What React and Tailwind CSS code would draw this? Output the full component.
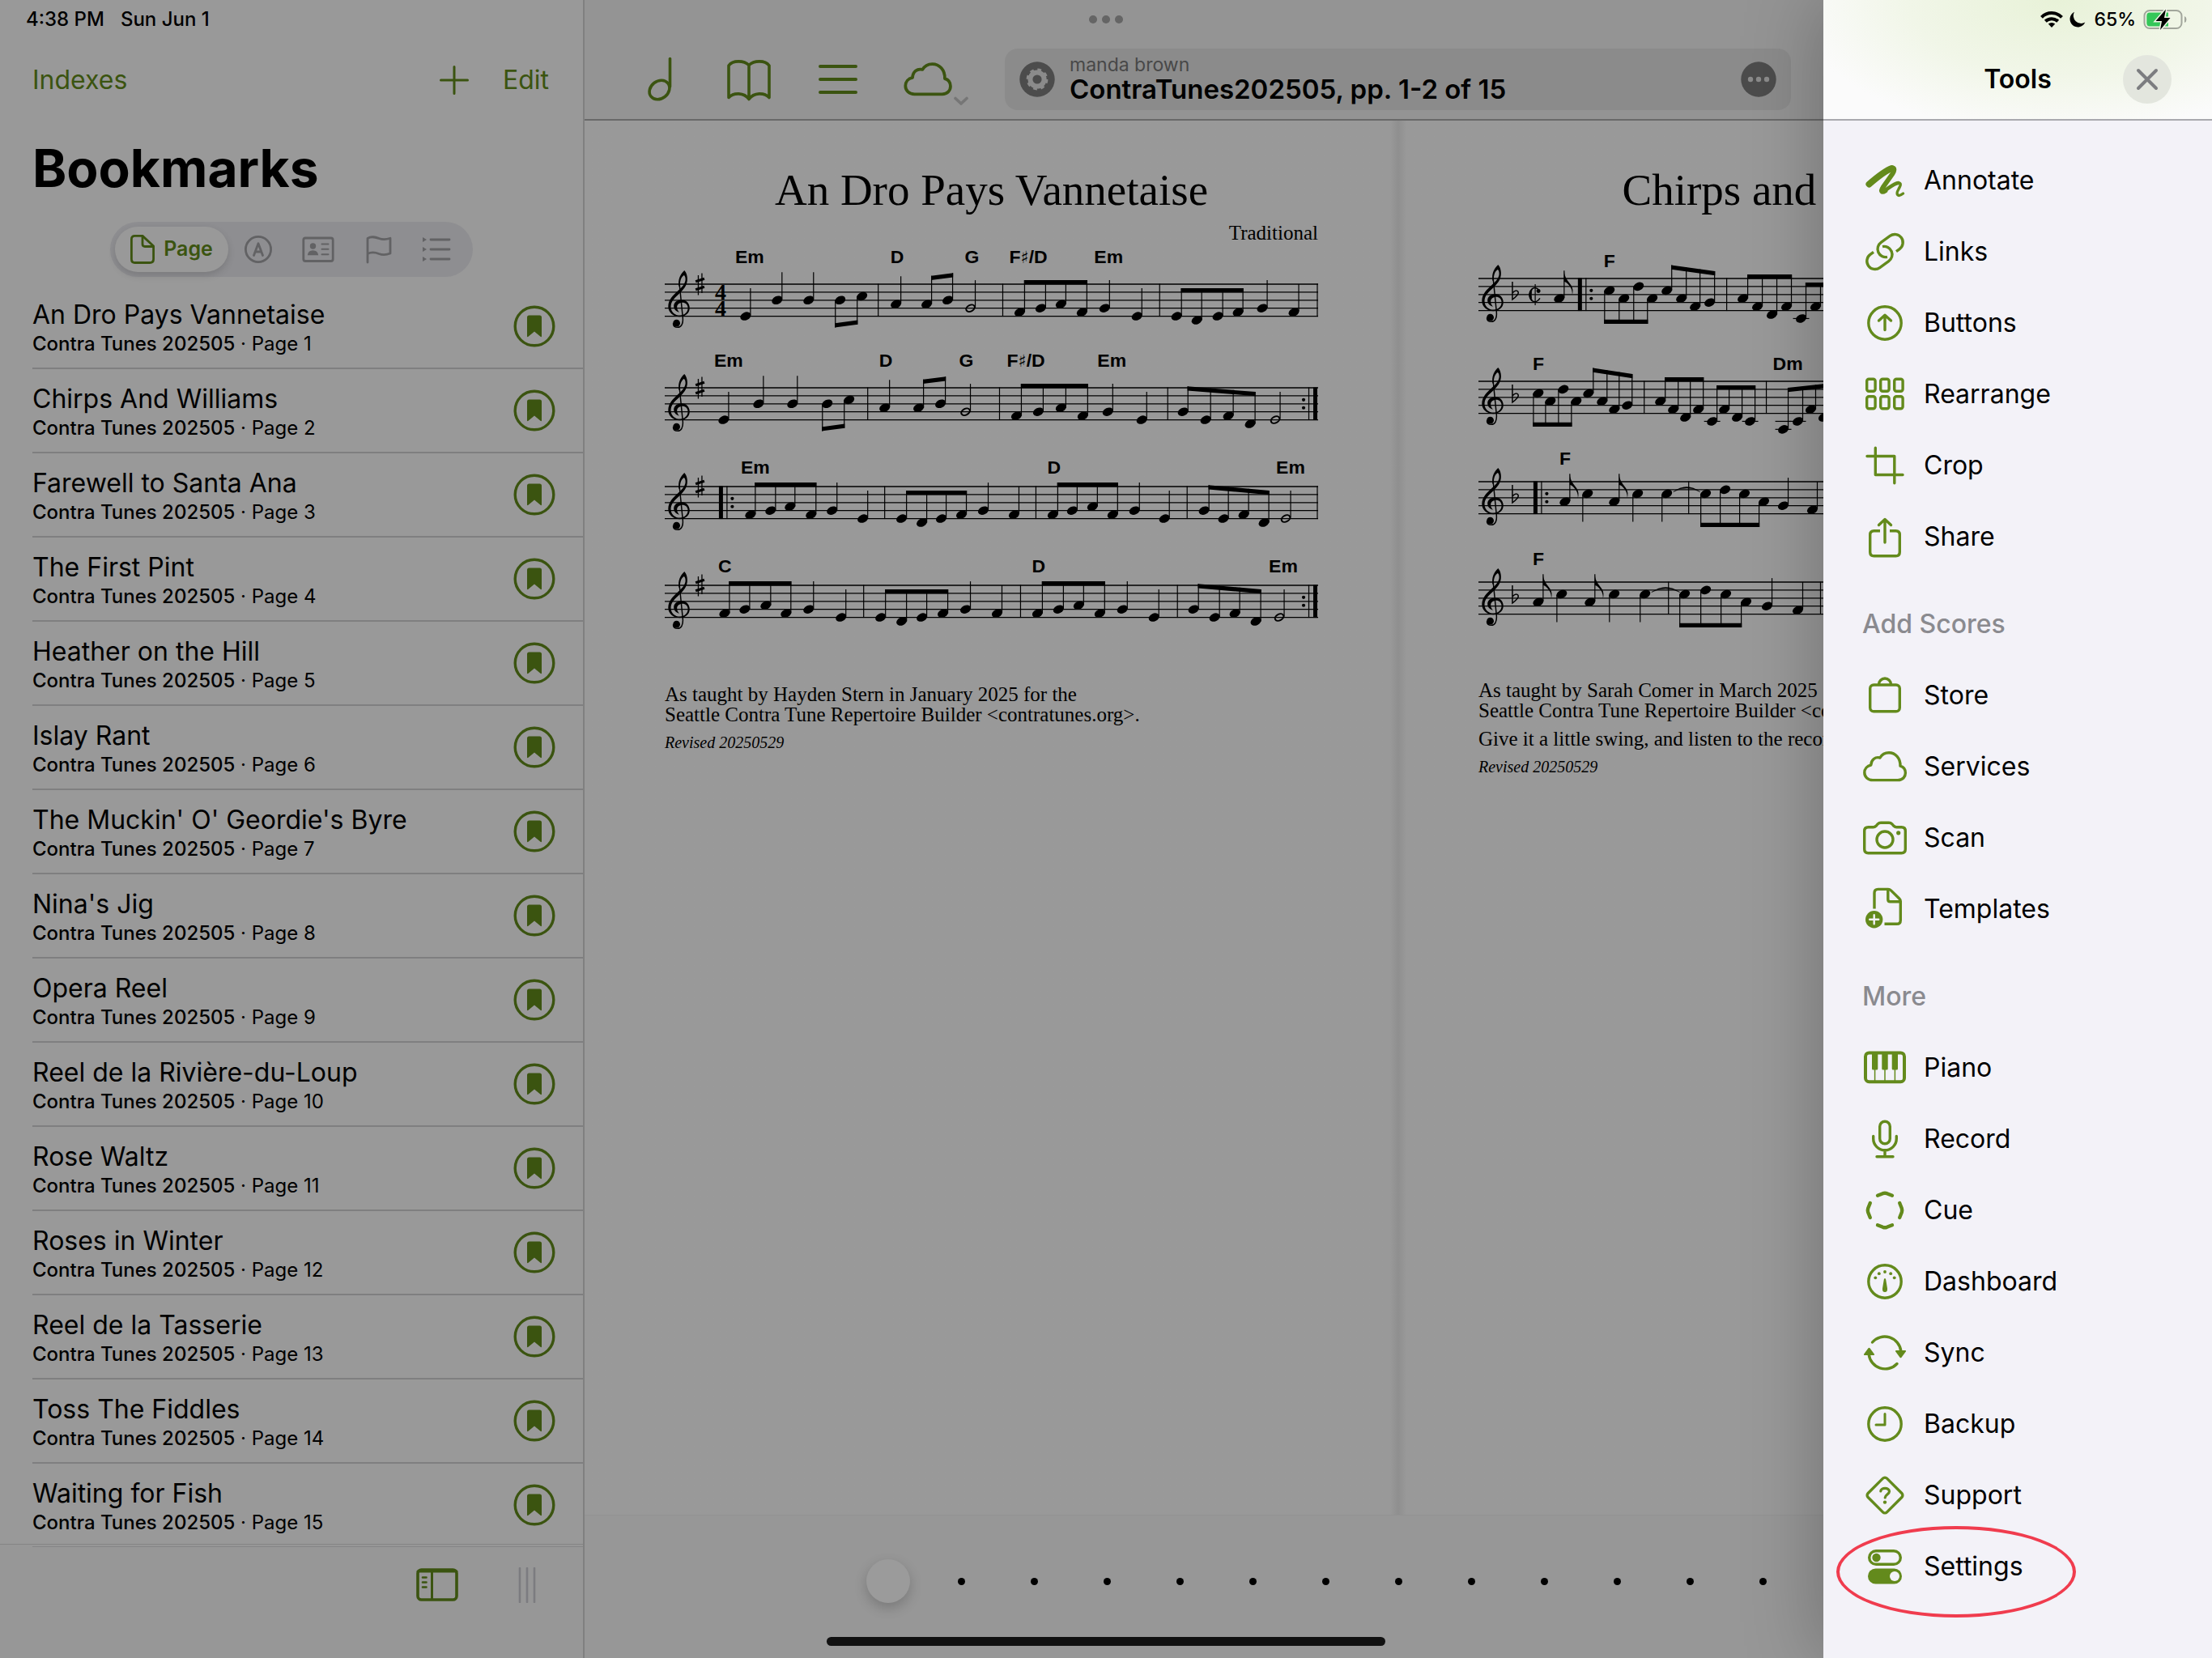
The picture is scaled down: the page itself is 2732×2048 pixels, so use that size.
import React from "react";

const GAP = 9.9;
const yOf = (step) => (step * GAP) / 2;

/* ---------- Music notation ---------- */

function Head({ x, step, hollow }) {
  const y = yOf(step);
  const ledgers = [];
  for (let s = 10; s <= step; s += 2) ledgers.push(s);
  return (
    <g>
      {ledgers.map((s) => (
        <line key={s} x1={x - 10} x2={x + 10} y1={yOf(s)} y2={yOf(s)} stroke="#000" strokeWidth="1.2" />
      ))}
      {hollow ? (
        <ellipse cx={x} cy={y} rx="5.6" ry="3.8" fill="none" stroke="#000" strokeWidth="2" transform={`rotate(-28 ${x} ${y})`} />
      ) : (
        <ellipse cx={x} cy={y} rx="6.8" ry="4.9" transform={`rotate(-25 ${x} ${y})`} />
      )}
    </g>
  );
}

function Single({ x, step, down, hollow, flag }) {
  const y = yOf(step);
  const sx = down ? x - 6 : x + 6;
  const end = down ? y + 34.6 : y - 34.6;
  return (
    <g>
      <Head x={x} step={step} hollow={hollow} />
      <line x1={sx} x2={sx} y1={down ? y + 1 : y - 1} y2={end} stroke="#000" strokeWidth="1.2" />
      {flag && (
        <path d={`M${sx} ${end} c.5 10 5.500 13 8.500 18 c2.600 4 2.600 8 1.500 12 c.2-6-2-10-5-13 c-2-2.200-3.800-3-5-3.200 z`} />
      )}
    </g>
  );
}

function Beam({ notes, down, y1, y2 }) {
  const dx = down ? -6 : 6;
  const xa = notes[0][0] + dx;
  const xb = notes[notes.length - 1][0] + dx;
  const at = (x) => y1 + ((y2 - y1) * (x - xa)) / (xb - xa);
  const t = down ? -5.2 : 5.2;
  return (
    <g>
      {notes.map(([x, s]) => (
        <g key={x}>
          <Head x={x} step={s} />
          <line x1={x + dx} x2={x + dx} y1={yOf(s)} y2={at(x + dx)} stroke="#000" strokeWidth="1.2" />
        </g>
      ))}
      <path d={`M${xa - 0.6} ${y1} L${xb + 0.6} ${y2} V${y2 + t} L${xa - 0.6} ${y1 + t} Z`} />
    </g>
  );
}

const H = 4 * GAP;
const Dots = ({ x }) => (
  <g>
    <circle cx={x} cy={yOf(3)} r="2.100" />
    <circle cx={x} cy={yOf(5)} r="2.100" />
  </g>
);
const Vert = ({ x, w = 1.2 }) => <rect x={x - w / 2} y="-.5" width={w} height={H + 1} />;

function RepeatStart({ x }) {
  return (
    <g>
      <Vert x={x + 2.5} w={5} />
      <Vert x={x + 10} />
      <Dots x={x + 16.5} />
    </g>
  );
}
function RepeatEnd() {
  return (
    <g>
      <Dots x={790} />
      <Vert x={796.5} />
      <Vert x={804.5} w={5} />
    </g>
  );
}

const Clef = () => (
  <g>
    <path d="M24.300-17 C27-14 28.500-9 27.800-4 C26.800 4 20 10 15 14.500 C9 20 7.300 24 7.600 29 C8.200 35 13 38.800 19 38.600 C24.500 38.400 28.600 34.500 28.600 29.500 C28.600 25.400 25.500 22.800 22 22.800 C18 22.800 15.200 25 15.200 28.600 C15.200 31 16.200 33 18 34.800 C13.500 33.400 11.200 30.500 11.200 27 C11.300 22.400 15.500 19.300 21 19.300 C26.800 19.300 30.800 23.800 30.800 29.500 C30.800 36 25 40.200 18.500 40.200 C10 40.200 4.300 34.500 4.300 27.500 C4.300 19 11 13 16 8.500 C21 4 25 0 25.600-5 C25.800-8 25.200-10.200 23.700-11 C20.500-9 18.800-4 19 1 L17.400 3 C16.200-6 19-12 24.300-17 Z" />
    <path d="M18.200 0 L22.300 41 C23.100 49.500 20 53.400 16 53.400 C12.600 53.400 10.500 51.400 10.500 48.500" fill="none" stroke="#000" strokeWidth="1.500" />
    <circle cx="14.600" cy="48.200" r="4.400" />
  </g>
);

const Sharp = () => (
  <g>
    <path d="M41.500-11 V13.500 M46-13.500 V11" stroke="#000" strokeWidth="1.300" />
    <path d="M38.200-3.200 L49-6.800 M38.200 6.800 L49 3.200" stroke="#000" strokeWidth="3.200" />
  </g>
);
const Flat = () => (
  <path d="M42 4 V26 C46 23 49.300 20.500 49.300 17.800 C49.300 14.600 45.600 14 42.500 17.500" fill="none" stroke="#000" strokeWidth="1.500" />
);
const CutTime = () => (
  <g>
    <path d="M74.500 14.200 C73 11.500 69.500 10.800 67 12.500 C62.400 15.500 62.400 25 67 28 C70 29.800 73.800 28.500 76 24.500" fill="none" stroke="#000" strokeWidth="1.500" />
    <path d="M66.500 12.500 C61.500 16 61.500 24.500 66.500 28 C64.800 24 64.800 17 66.500 12.500Z" stroke="#000" />
    <circle cx="74.200" cy="15.500" r="2.500" />
    <path d="M70.200 7 V33" stroke="#000" strokeWidth="1.200" />
  </g>
);

function System({ sharp, time, chordY, chords, bars, children }) {
  return (
    <svg viewBox="0 -44 808 104" className="block h-[104px] w-full overflow-visible" role="img" aria-label="Staff">
      {[0, 2, 4, 6, 8].map((s) => (
        <line key={s} x1="0" x2="808" y1={yOf(s)} y2={yOf(s)} stroke="#000" strokeWidth="1.3" />
      ))}
      <Clef />
      {sharp ? <Sharp /> : <Flat />}
      {time === "common" && (
        <g className="font-['Liberation_Serif',serif] text-[28px] font-bold">
          <text x="62" y="19">4</text>
          <text x="62" y="39">4</text>
        </g>
      )}
      {time === "cut" && <CutTime />}
      {bars.map((x) => (
        <Vert key={x} x={x} />
      ))}
      <g className="font-['Liberation_Sans',sans-serif] text-[23px] font-bold">
        {chords.map(([x, name]) => (
          <text key={x} x={x} y={chordY}>
            {name.split("♯")[0]}
            {name.includes("♯") && <tspan className="font-['DejaVu_Sans',sans-serif] text-[21px] font-normal">♯</tspan>}
            {name.includes("♯") && name.split("♯")[1]}
          </text>
        ))}
      </g>
      {children}
    </svg>
  );
}

const Quarters = ({ list, down, hollow, flag }) =>
  list.map(([x, s]) => <Single key={x} x={x} step={s} down={down} hollow={hollow} flag={flag} />);

function AnDro() {
  return (
    <div className="flex flex-col gap-[18px]">
      <div className="mb-[6px]">
        <System sharp time="common" chordY={-26} bars={[264, 418, 612, 807]}
          chords={[[87, "Em"], [279, "D"], [371, "G"], [426, "F♯/D"], [531, "Em"]]}>
          <Quarters list={[[100, 8], [139, 4], [178, 4], [286, 5], [544, 6], [584, 8], [739, 6], [778, 7]]} />
          <Quarters hollow list={[[378, 6]]} />
          <Beam down notes={[[217, 4], [244, 3]]} y1={53.5} y2={49.7} />
          <Beam notes={[[324, 5], [350, 4]]} y1={-10.3} y2={-13.8} />
          <Beam notes={[[439, 7], [465, 6], [490, 5], [516, 7]]} y1={-5} y2={-5} />
          <Beam notes={[[633, 8], [658, 9], [684, 8], [709, 7]]} y1={5} y2={5} />
        </System>
      </div>
      <System sharp chordY={-26} bars={[251, 414, 622]}
        chords={[[61, "Em"], [265, "D"], [364, "G"], [423, "F♯/D"], [535, "Em"]]}>
        <Quarters list={[[73, 8], [116, 4], [158, 4], [272, 5], [548, 6], [590, 8]]} />
        <Quarters hollow list={[[372, 6], [755, 8]]} />
        <Beam down notes={[[201, 4], [228, 3]]} y1={53.5} y2={49.7} />
        <Beam notes={[[314, 5], [341, 4]]} y1={-10.3} y2={-13.8} />
        <Beam notes={[[435, 7], [462, 6], [490, 5], [517, 7]]} y1={-5} y2={-5} />
        <Beam notes={[[641, 6], [669, 8], [697, 7], [724, 9]]} y1={-1.7} y2={5} />
        <RepeatEnd />
      </System>
      <System sharp chordY={-16} bars={[272, 459, 646, 807]} chords={[[94, "Em"], [473, "D"], [756, "Em"]]}>
        <RepeatStart x={67} />
        <Quarters list={[[207, 6], [245, 8], [394, 6], [432, 7], [581, 6], [618, 8]]} />
        <Quarters hollow list={[[768, 8]]} />
        <Beam notes={[[106, 7], [131, 6], [155, 5], [181, 7]]} y1={-5} y2={-5} />
        <Beam notes={[[293, 8], [318, 9], [342, 8], [367, 7]]} y1={5} y2={5} />
        <Beam notes={[[480, 7], [504, 6], [529, 5], [554, 7]]} y1={-5} y2={-5} />
        <Beam notes={[[667, 6], [691, 8], [716, 7], [741, 9]]} y1={-1.7} y2={5} />
      </System>
      <System sharp chordY={-16} bars={[246, 440, 634]} chords={[[66, "C"], [454, "D"], [747, "Em"]]}>
        <Quarters list={[[178, 6], [218, 8], [372, 6], [411, 7], [566, 6], [605, 8]]} />
        <Quarters hollow list={[[760, 8]]} />
        <Beam notes={[[74, 7], [99, 6], [125, 5], [150, 7]]} y1={-5} y2={-5} />
        <Beam notes={[[267, 8], [293, 9], [318, 8], [344, 7]]} y1={5} y2={5} />
        <Beam notes={[[461, 7], [487, 6], [512, 5], [538, 7]]} y1={-5} y2={-5} />
        <Beam notes={[[654, 6], [680, 8], [705, 7], [731, 9]]} y1={-1.7} y2={5} />
        <RepeatEnd />
      </System>
    </div>
  );
}

const Tie = ({ a, b }) => {
  const m = (a + b) / 2;
  return <path d={`M${a} 12.500 Q${m} .5 ${b} 12.500 Q${m} 3.500 ${a} 12.500Z`} stroke="#000" strokeWidth=".5" />;
};

function Chirps() {
  return (
    <div className="flex flex-col gap-[20px]">
      <div className="mb-[3px]">
        <System time="cut" chordY={-14} bars={[307]} chords={[[155, "F"]]}>
          <Quarters flag list={[[100, 5]]} />
          <RepeatStart x={123} />
          <Beam down notes={[[162, 3], [180, 5], [198, 2], [215, 5]]} y1={56} y2={56} />
          <Beam notes={[[233, 3], [251, 5], [268, 7], [286, 6]]} y1={-16.5} y2={-9} />
          <Beam notes={[[327, 5], [345, 7], [363, 9], [381, 7]]} y1={-5} y2={-5} />
          <Beam notes={[[399, 10], [417, 7], [435, 9], [453, 10]]} y1={5} y2={5} />
        </System>
      </div>
      <System chordY={-14} bars={[205, 356]} chords={[[67, "F"], [364, "Dm"]]}>
        <Beam down notes={[[74, 3], [89, 5], [105, 2], [121, 5]]} y1={56} y2={56} />
        <Beam notes={[[136, 3], [153, 5], [168, 7], [184, 6]]} y1={-16.5} y2={-9} />
        <Beam notes={[[225, 5], [241, 7], [256, 9], [272, 7]]} y1={-5} y2={-5} />
        <Beam notes={[[289, 10], [304, 7], [320, 9], [336, 10]]} y1={5} y2={5} />
        <Beam notes={[[377, 12], [395, 10], [411, 7], [427, 9]]} y1={8} y2={2.5} />
      </System>
      <System chordY={-21} bars={[260]} chords={[[100, "F"]]}>
        <RepeatStart x={68} />
        <Quarters flag list={[[107, 5], [168, 5]]} />
        <Quarters down list={[[135, 3], [197, 3], [233, 3]]} />
        <Tie a={241} b={274} />
        <Beam down notes={[[281, 3], [305, 2], [329, 3], [353, 5]]} y1={56} y2={56} />
        <Quarters list={[[377, 6], [413, 7]]} />
      </System>
      <System chordY={-21} bars={[235, 423]} chords={[[67, "F"]]}>
        <Quarters flag list={[[74, 5], [138, 5]]} />
        <Quarters down list={[[103, 3], [168, 3], [206, 3]]} />
        <Tie a={214} b={249} />
        <Beam down notes={[[255, 3], [281, 2], [306, 3], [331, 5]]} y1={56} y2={56} />
        <Quarters list={[[357, 6], [395, 7]]} />
      </System>
    </div>
  );
}

/* ---------- Icons ---------- */

function Ico({ children, w = 3.4 }) {
  return (
    <svg viewBox="0 0 60 60" className="size-[60px] shrink-0" fill="none" stroke="currentColor" strokeWidth={w} strokeLinecap="round" strokeLinejoin="round" aria-hidden="true">
      {children}
    </svg>
  );
}
const solid = { fill: "currentColor", stroke: "none" };
const CLOUD = "M15 46.600 H46 C52 46.600 55.400 42.500 55.400 37.800 C55.400 33.500 52.800 30.300 49 29.200 C49.300 19.500 43 12.800 35 12.800 C30 12.800 26.300 15 24 19 C18 17.500 13 21.500 12.800 28 C8 29 4.800 32.700 4.800 37.300 C4.800 42.700 9 46.600 15 46.600Z";
const LINK = "M33 36.400 A10 10 0 0 1 25.300 18.400 L36.300 10.400 A10 10 0 0 1 48.100 26.600 L44 29.600";

const icons = {
  Annotate: (
    <Ico>
      <path d="M10.500 34.500 C18 28 30 18 38.500 15" strokeWidth="8" />
      <path d="M38.500 14.500 C43 14 41.500 18 39.500 21.500 L27.500 38.500 C24.500 43 26 45.500 30.500 42.500" strokeWidth="5.800" />
      <path d="M28 43.500 C35 39.500 41 33.500 46.500 33" strokeWidth="4.600" />
      <path d="M46 33 C51 32.500 49.500 36 46.500 41.500 C43.500 46.500 45.500 51.500 52.500 46" strokeWidth="3.400" />
    </Ico>
  ),
  Links: (
    <Ico>
      <path d={LINK} strokeLinecap="butt" />
      <path d={LINK} strokeLinecap="butt" transform="rotate(180 30 30)" />
    </Ico>
  ),
  Buttons: (
    <Ico>
      <circle cx="30" cy="30" r="20.200" />
      <path d="M30 20.500 V38.500 M22.500 27 L30 20.300 L37.500 27" />
    </Ico>
  ),
  Rearrange: (
    <Ico>
      {[7.7, 24.7, 41.7].map((x) => [11.3, 32.8].map((y) => <rect key={x + "-" + y} x={x} y={y} width="10.400" height="15" rx="2.500" />))}
    </Ico>
  ),
  Crop: (
    <Ico>
      <path d="M8 18.500 H41.800 V51.800 M18.300 8.200 V41.500 H52" />
    </Ico>
  ),
  Share: (
    <Ico>
      <path d="M24 22.700 H16.500 Q11.700 22.700 11.700 27.500 V49 Q11.700 53.800 16.500 53.800 H43.500 Q48.300 53.800 48.300 49 V27.500 Q48.300 22.700 43.500 22.700 H36" strokeLinecap="butt" />
      <path d="M30 8.800 V37 M22.500 15.500 L30 8.600 L37.500 15.500" />
    </Ico>
  ),
  Store: (
    <Ico>
      <rect x="11.700" y="17" width="36.600" height="32.800" rx="4.500" />
      <path d="M22.500 16.500 A7.500 7.500 0 0 1 37.500 16.500" />
    </Ico>
  ),
  Services: <Ico><path d={CLOUD} /></Ico>,
  Scan: (
    <Ico>
      <path d="M9.500 16.800 H15.500 Q17.500 16.800 19 15.300 L21 13 Q22.800 11.300 25 11.300 H35 Q37.200 11.300 39 13 L41 15.300 Q42.500 16.800 44.500 16.800 H50.500 Q55.300 16.800 55.300 21.500 V44 Q55.300 48.700 50.500 48.700 H9.500 Q4.700 48.700 4.700 44 V21.500 Q4.700 16.800 9.500 16.800Z" />
      <circle cx="30" cy="32" r="10" />
      <circle cx="46.700" cy="23.800" r="2.600" {...solid} />
    </Ico>
  ),
  Templates: (
    <Ico>
      <path d="M17 29.500 V10 Q17 5.400 21.600 5.400 H34 Q36 5.400 37.500 6.900 L47.800 17 Q49.300 18.500 49.300 20.500 V43.700 Q49.300 48.300 44.700 48.300 H29.500" strokeLinecap="butt" />
      <path d="M33.800 6 V18 Q33.800 20.800 36.500 20.800 H48.500" />
      <circle cx="16.700" cy="42.800" r="10.700" {...solid} />
      <path d="M16.700 37.300 V48.300 M11.200 42.800 H22.200" stroke="#f3f2f8" strokeWidth="2.400" />
    </Ico>
  ),
  Piano: (
    <Ico>
      <rect x="6" y="11.400" width="48" height="35.800" rx="4.500" strokeWidth="4" />
      <path d="M14 12 H21.300 V31 Q21.300 32.500 20 32.500 H15.300 Q14 32.500 14 31Z M26.300 12 H33.700 V31 Q33.700 32.500 32.400 32.500 H27.600 Q26.300 32.500 26.300 31Z M38.700 12 H46 V31 Q46 32.500 44.700 32.500 H40 Q38.700 32.500 38.700 31Z" {...solid} />
      <path d="M17.600 32 V47 M30 32 V47 M42.400 32 V47" strokeWidth="1.500" />
    </Ico>
  ),
  Record: (
    <Ico>
      <rect x="23.700" y="8.200" width="12.600" height="27.600" rx="6.300" />
      <path d="M15.700 26.500 V29.500 A14.300 14.300 0 0 0 44.300 29.500 V26.500 M30 44 V51.500 M20 51.800 H40" />
    </Ico>
  ),
  Cue: (
    <Ico w={4.4}>
      <path d="M21 11.800 L27.500 9.200 Q30 8.400 32.500 9.200 L39 11.800 M21 48.200 L27.500 50.800 Q30 51.600 32.500 50.800 L39 48.200 M11.800 21 L9.200 27.500 Q8.400 30 9.200 32.500 L11.800 39 M48.200 21 L50.800 27.500 Q51.600 30 50.800 32.500 L48.200 39" />
    </Ico>
  ),
  Dashboard: (
    <Ico>
      <circle cx="30" cy="30" r="20.200" />
      {[[18.3, 25.3], [22.8, 20.2], [30, 18], [37.2, 20.2], [41.7, 25.3]].map(([x, y]) => (
        <circle key={x} cx={x} cy={y} r="1.900" {...solid} />
      ))}
      <path d="M30 26 Q31 26 31.200 27.500 L33 38.500 Q33.400 43 30 43 Q26.600 43 27 38.500 L28.800 27.500 Q29 26 30 26Z" {...solid} />
    </Ico>
  ),
  Sync: (
    <Ico>
      <path d="M14.500 17 A20.200 20.200 0 0 1 49.800 28 M45 43.500 A20.200 20.200 0 0 1 10.200 32" />
      <path d="M43.500 27 H55.500 Q56.500 27.500 55.800 28.500 L50.500 35.800 Q49.500 36.800 48.500 35.800 L43.200 28.500 Q42.600 27.500 43.500 27Z" {...solid} />
      <path d="M43.500 27 H55.500 Q56.500 27.500 55.800 28.500 L50.500 35.800 Q49.500 36.800 48.500 35.800 L43.200 28.500 Q42.600 27.500 43.500 27Z" {...solid} transform="rotate(180 30 30)" />
    </Ico>
  ),
  Backup: (
    <Ico>
      <circle cx="30" cy="30" r="20.200" />
      <path d="M30 17.500 V31 H19" strokeWidth="3" />
    </Ico>
  ),
  Support: (
    <Ico>
      <rect x="13.500" y="13.500" width="33" height="33" rx="3.500" transform="rotate(45 30 30)" />
      <path d="M24.800 25 C24.800 20.500 35.500 19.800 35.500 25.300 C35.500 28.800 30.200 29.300 30.200 33" strokeWidth="3.200" />
      <circle cx="30" cy="38.600" r="2.200" {...solid} />
    </Ico>
  ),
  Settings: (
    <Ico>
      <rect x="10.700" y="10.700" width="38.600" height="16.600" rx="8.300" />
      <circle cx="19.500" cy="19" r="5.200" {...solid} />
      <rect x="9" y="32.500" width="42" height="19" rx="9.500" {...solid} />
      <circle cx="42" cy="42" r="6" fill="#f3f2f8" stroke="none" />
    </Ico>
  ),
};

/* ---------- Sidebar ---------- */

const tunes = [
  "An Dro Pays Vannetaise", "Chirps And Williams", "Farewell to Santa Ana", "The First Pint", "Heather on the Hill",
  "Islay Rant", "The Muckin' O' Geordie's Byre", "Nina's Jig", "Opera Reel", "Reel de la Rivière-du-Loup",
  "Rose Waltz", "Roses in Winter", "Reel de la Tasserie", "Toss The Fiddles", "Waiting for Fish",
];

function Segments() {
  const s = "size-[40px]";
  const common = { fill: "none", stroke: "currentColor", strokeWidth: 2.8, strokeLinecap: "round", strokeLinejoin: "round", viewBox: "0 0 40 40" };
  const cell = "flex h-[56px] w-[75px] items-center justify-center";
  return (
    <div className="ml-[136px] flex h-[68px] w-[448px] items-center rounded-full bg-[#8e8e91] px-[6px] text-[#626264]">
      <button className="flex h-[56px] w-[140px] items-center justify-center gap-[6px] rounded-full bg-[#999999] pr-[5px] text-[25px] font-semibold text-[#3b5410] shadow-[0_4px_10px_rgba(0,0,0,0.14)]">
        <svg {...common} className={s}>
          <path d="M10 3.400 H20 L33.600 16 V32 Q33.600 36.500 29 36.500 H10.500 Q6.400 36.500 6.400 32 V7.500 Q6.400 3.400 10.500 3.400Z" />
          <path d="M20 4 V13.500 Q20 16.500 23 16.500 H33" />
        </svg>
        Page
      </button>
      <button className="flex h-[56px] w-[73px] items-center justify-center" aria-label="Annotations">
        <svg {...common} className={s}><circle cx="20" cy="20" r="15.600" /><path d="M14.500 27.500 L20 12.800 L25.500 27.500 M16.500 23 H23.500" /></svg>
      </button>
      <button className={cell} aria-label="Details">
        <svg {...common} className={s}>
          <rect x="1.800" y="6" width="36.400" height="28.500" rx="2.500" />
          <circle cx="13.500" cy="16" r="3.700" {...solid} /><path d="M6.800 27.300 Q7.500 21.200 13.500 21.200 Q19.500 21.200 20.200 27.300Z" {...solid} />
          <path d="M24.500 13.500 H32.500 M24.500 19.800 H32.500 M24.500 26.200 H32.500" strokeWidth="2" />
        </svg>
      </button>
      <button className={cell} aria-label="Flags">
        <svg {...common} className={s}><path d="M6 36 V6.500 C11 3 16 5 20 6.500 C25 8.300 29 8 34 6.200 V25 C29 27 25 27.300 20 25.500 C15 23.500 11 23 6 25.500" /></svg>
      </button>
      <button className="flex h-[56px] w-[68px] items-center justify-center" aria-label="List">
        <svg {...common} className={s}>
          <path d="M13 8 H36 M13 20 H36 M13 32 H36" />
          <path d="M3 5 L8 8 L3 11Z M3 17 L8 20 L3 23Z M3 29 L8 32 L3 35Z" {...solid} />
        </svg>
      </button>
    </div>
  );
}

function Sidebar() {
  return (
    <aside className="flex w-[722px] shrink-0 flex-col border-r-2 border-[#808080] bg-[#999999]">
      <div className="flex h-[48px] items-center gap-[20px] pl-[32px] text-[24px] font-medium"><span>4:38 PM</span><span>Sun Jun 1</span></div>
      <div className="flex h-[102px] items-center pr-[42px] pl-[40px] text-[32px] text-[#3b5410]">
        <button>Indexes</button>
        <button className="ml-auto" aria-label="Add">
          <svg viewBox="0 0 36 36" className="size-[36px]" fill="none" stroke="currentColor" strokeWidth="3" strokeLinecap="round"><path d="M18 1.500 V34.500 M1.500 18 H34.500" /></svg>
        </button>
        <button className="ml-[42px]">Edit</button>
      </div>
      <h1 className="h-[124px] pt-[18px] pl-[40px] text-[64px] leading-[80px] font-bold">Bookmarks</h1>
      <Segments />
      <ul className="mt-[10px]">
        {tunes.map((t, i) => (
          <li key={t} className="ml-[40px] h-[104px] border-b-2 border-[#7f7f80] last:h-[99px] last:border-b-0">
            <button className="flex w-full pt-[17px] pr-[34px] text-left">
              <span className="flex-1">
                <span className="block text-[32px] leading-[40px]">{t}</span>
                <span className="block text-[24px] leading-[32px]"><span className="font-medium">Contra Tunes 202505</span> · Page {i + 1}</span>
              </span>
              <svg viewBox="0 0 52 52" className="mt-[8px] size-[52px] text-[#3b5410]" aria-hidden="true">
                <circle cx="26" cy="26" r="23.800" fill="none" stroke="currentColor" strokeWidth="3.400" />
                <path d="M17 15 Q17 12.500 19.500 12.500 H32.500 Q35 12.500 35 15 V38 Q35 40 33.500 38.800 L26 32.500 L18.500 38.800 Q17 40 17 38Z" fill="currentColor" />
              </svg>
            </button>
          </li>
        ))}
      </ul>
      <div className="flex-1 border-t border-[#858585] bg-[#979797]">
        <div className="mt-[2px] ml-[40px] h-px bg-[#858586]" />
        <div className="flex items-center justify-end gap-[73px] pt-[25px] pr-[57px]">
          <button aria-label="Toggle sidebar" className="text-[#3b5410]">
            <svg viewBox="0 0 52 42" className="h-[42px] w-[52px]" fill="none" stroke="currentColor" strokeWidth="3.600" strokeLinecap="round">
              <rect x="2" y="2" width="48" height="37" rx="4.500" /><path d="M2 4 H50" strokeWidth="3" /><path d="M19.500 3 V38" strokeWidth="3" /><path d="M8 11.500 H12.500 M8 17.500 H12.500 M8 23.500 H12.500" strokeWidth="2.600" />
            </svg>
          </button>
          <svg viewBox="0 0 24 44" className="h-[44px] w-[24px]" stroke="#7c7c80" strokeWidth="2.600" strokeLinecap="round"><path d="M3 1 V43 M12 1 V43 M21 1 V43" /></svg>
        </div>
      </div>
    </aside>
  );
}

/* ---------- Score viewer ---------- */

function Toolbar() {
  const a = { fill: "none", stroke: "currentColor", strokeWidth: 3.6, strokeLinecap: "round", strokeLinejoin: "round", viewBox: "0 0 60 60", className: "size-[60px]" };
  return (
    <header className="h-[149px] shrink-0 border-b-2 border-[#696969] bg-[#949494]">
      <div className="flex h-[48px] items-center gap-[6px] pl-[623px]">
        <i className="size-[10px] rounded-full bg-[#656565]" />
        <i className="size-[10px] rounded-full bg-[#656565]" />
        <i className="size-[10px] rounded-full bg-[#656565]" />
      </div>
      <div className="flex h-[100px] items-center pr-[40px] pl-[63px] text-[#3b5410]">
        <button aria-label="Scores">
          <svg {...a}><path d="M42.500 4.500 V39" /><ellipse cx="29.500" cy="43" rx="13.300" ry="10.800" transform="rotate(-38 29.500 43)" /></svg>
        </button>
        <button aria-label="Bookmarks" className="ml-[50px]">
          <svg {...a}><path d="M30 12.500 C24 6.500 10 6 5 13 V52.500 C11 46 24 46 30 54.500 C36 46 49 46 55 52.500 V13 C50 6 36 6.500 30 12.500 V54" /></svg>
        </button>
        <button aria-label="Setlists" className="ml-[50px]">
          <svg {...a}><path d="M8 14 H52 M8 30 H52 M8 46 H52" strokeWidth="4" /></svg>
        </button>
        <button aria-label="Services" className="ml-[48px] flex items-center">
          <svg viewBox="0 0 60 60" className="size-[66px]" fill="none" stroke="currentColor" strokeWidth="3.400" strokeLinejoin="round"><path d={CLOUD} /></svg>
          <svg viewBox="0 0 20 12" className="mt-[53px] -ml-[2px] h-[12px] w-[20px]" fill="none" stroke="#767676" strokeWidth="3.600" strokeLinecap="round" strokeLinejoin="round"><path d="M3 2.500 L10 9 L17 2.500" /></svg>
        </button>
        <div className="ml-[44px] flex h-[76px] flex-1 items-center rounded-[16px] bg-[#8b8b8b] px-[18px] text-black">
          <button aria-label="Score settings">
            <svg viewBox="0 0 44 44" className="size-[44px]">
              <circle cx="22" cy="22" r="21.700" fill="#4c4c4c" />
              <circle cx="22" cy="22" r="8.600" fill="none" stroke="#8b8b8b" strokeWidth="6" />
              <circle cx="22" cy="22" r="11.600" fill="none" stroke="#8b8b8b" strokeWidth="3.600" strokeDasharray="4.600 4.511" />
            </svg>
          </button>
          <div className="ml-[18px] flex-1">
            <div className="text-[23px] leading-[24px] text-[#484848]">manda brown</div>
            <div className="text-[33px] leading-[36px] font-semibold">ContraTunes202505, pp. 1-2 of 15</div>
          </div>
          <button aria-label="More">
            <svg viewBox="0 0 44 44" className="size-[44px]"><circle cx="22" cy="22" r="21.700" fill="#4c4c4c" /><g fill="#8b8b8b"><circle cx="12" cy="22" r="3.200" /><circle cx="22" cy="22" r="3.200" /><circle cx="32" cy="22" r="3.200" /></g></svg>
          </button>
        </div>
      </div>
    </header>
  );
}

function Viewer() {
  return (
    <main className="flex min-w-0 flex-1 flex-col overflow-hidden bg-[#979797]">
      <Toolbar />
      <div className="flex flex-1 border-b border-[#929292] bg-[#999999] font-['Liberation_Serif',serif] text-[25px] leading-[25px] whitespace-nowrap">
        <section className="w-[1005px] shrink-0 bg-linear-to-r from-[#999999] from-99% to-[#8f8f8f] px-[99px]">
          <h2 className="pt-[48px] text-center text-[55px] leading-[76px]">An Dro Pays Vannetaise</h2>
          <p className="pt-[2px] text-right">Traditional</p>
          <div className="mt-[7px]"><AnDro /></div>
          <p className="mt-[62px]">As taught by Hayden Stern in January 2025 for the<br />Seattle Contra Tune Repertoire Builder &lt;contratunes.org&gt;.</p>
          <p className="mt-[10px] text-[20px] italic">Revised 20250529</p>
        </section>
        <section className="w-[1005px] shrink-0 bg-linear-to-l from-[#999999] from-99% to-[#8f8f8f] px-[99px]">
          <h2 className="pt-[48px] text-center text-[55px] leading-[76px]">Chirps and Williams</h2>
          <div className="mt-[27px]"><Chirps /></div>
          <p className="mt-[61px]">As taught by Sarah Comer in March 2025<br />Seattle Contra Tune Repertoire Builder &lt;contratunes.org&gt;.</p>
          <p className="mt-[10px]">Give it a little swing, and listen to the recording.</p>
          <p className="mt-[10px] text-[20px] italic">Revised 20250529</p>
        </section>
      </div>
      <div className="flex h-[176px] flex-col justify-between pb-[15px]">
        <nav className="flex h-[160px] items-center pt-[2px] pl-[330px]" aria-label="Pages">
          {Array.from({ length: 13 }, (_, i) => (
            <button key={i} aria-label={"Position " + (i + 1)} className="flex w-[90px] shrink-0 items-center justify-center">
              {i === 0 ? (
                <span className="size-[54px] rounded-full bg-[#9b9b9b] shadow-[0_6px_16px_rgba(0,0,0,0.2)]" />
              ) : (
                <span className="size-[9px] rounded-full bg-black" />
              )}
            </button>
          ))}
        </nav>
        <div className="-mt-[10px] ml-[299px] h-[11px] w-[690px] shrink-0 rounded-full bg-[#111111]" />
      </div>
    </main>
  );
}

/* ---------- Tools drawer ---------- */

const groups = [
  { items: ["Annotate", "Links", "Buttons", "Rearrange", "Crop", "Share"] },
  { title: "Add Scores", items: ["Store", "Services", "Scan", "Templates"] },
  { title: "More", items: ["Piano", "Record", "Cue", "Dashboard", "Sync", "Backup", "Support", "Settings"] },
];

function Drawer() {
  return (
    <aside className="z-10 w-[480px] shrink-0 bg-[#f3f2f8] shadow-[0_0_90px_rgba(0,0,0,0.28)]">
      <header className="h-[149px] border-b-2 border-[#a9a9ae] bg-[#fbfbfb] bg-[radial-gradient(ellipse_at_60%_0%,#e8f2d8,#f1f6e8_45%,#fbfbfb_80%)]">
        <div className="flex h-[48px] items-center pr-[31px] text-[23px] font-medium">
          <svg viewBox="0 0 30 22" className="ml-auto h-[22px] w-[30px]" fill="none" stroke="#000" strokeWidth="4">
            <path d="M2.500 8.300 A17.500 17.500 0 0 1 27.500 8.300 M7.300 13.300 A11 11 0 0 1 22.700 13.300" />
            <path d="M15 21 L10.800 16.600 A6 6 0 0 1 19.200 16.600Z" fill="#000" stroke="none" />
          </svg>
          <svg viewBox="0 0 20 20" className="ml-[7px] size-[20px]"><path d="M6 .8 A9.800 9.800 0 1 0 19.300 13.500 A9.500 9.500 0 0 1 6 .8Z" /></svg>
          <span className="ml-[10px]">65%</span>
          <svg viewBox="0 0 54 28" className="ml-[9px] h-[28px] w-[54px]">
            <rect x="1.500" y="3" width="46" height="22" rx="6.500" fill="none" stroke="#a2a69c" strokeWidth="2" />
            <path d="M51 10 Q53.500 11 53.500 14 Q53.500 17 51 18Z" fill="#a2a69c" />
            <path d="M8 5.500 H31 V22.500 H8 Q4.300 22.500 4.300 18.500 V9.500 Q4.300 5.500 8 5.500Z" fill="#35c759" />
            <path d="M28 1.500 L15.500 16 H23 L21 27 L33.500 12 H26Z" stroke="#f2f6e9" strokeWidth="3" /><path d="M28 1.500 L15.500 16 H23 L21 27 L33.500 12 H26Z" />
          </svg>
        </div>
        <div className="grid h-[100px] grid-cols-[1fr_auto_1fr] items-center pr-[50px] pl-[50px]">
          <h2 className="col-start-2 text-[32px] font-semibold">Tools</h2>
          <button aria-label="Close" className="flex size-[60px] items-center justify-center justify-self-end rounded-full bg-[#e3e6de]">
            <svg viewBox="0 0 28 28" className="size-[28px]" fill="none" stroke="#7c7d80" strokeWidth="4" strokeLinecap="round"><path d="M3 3 L25 25 M25 3 L3 25" /></svg>
          </button>
        </div>
      </header>
      <nav className="pt-[30px]">
        {groups.map((g) => (
          <section key={g.items[0]}>
            {g.title && <h3 className="flex h-[108px] items-center pt-[20px] pl-[48px] text-[32px] font-medium text-[#8a8a8f]">{g.title}</h3>}
            <ul>
              {g.items.map((name) => (
                <li key={name} className="relative h-[88px]">
                  <button className="flex h-full w-full items-center gap-[18px] pl-[46px] text-[32px] text-black">
                    <span className="text-[#638a1c]">{icons[name]}</span>
                    {name}
                  </button>
                  {name === "Settings" && (
                    <span className="pointer-events-none absolute top-[-6px] left-[16px] h-[113px] w-[296px] rounded-[50%] border-4 border-[#f03c4e]" />
                  )}
                </li>
              ))}
            </ul>
          </section>
        ))}
      </nav>
    </aside>
  );
}

export default function App() {
  return (
    <div className="flex min-h-screen bg-[#999999] font-['Inter',sans-serif] text-black">
      <Sidebar />
      <Viewer />
      <Drawer />
    </div>
  );
}
